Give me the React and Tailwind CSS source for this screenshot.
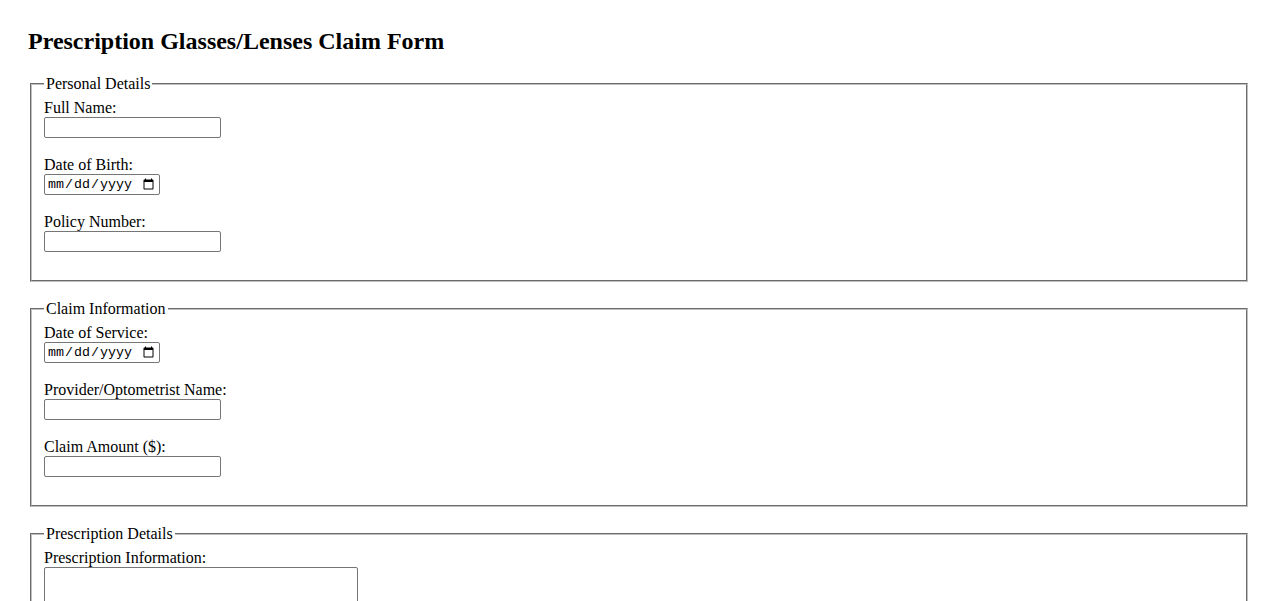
/*
Prescription Glasses/Lenses claim form.
Plain browser-looking form: serif text, grooved fieldsets, default inputs.
*/

import React from "react";

// one label + control pair
function Field({ label, children }) {
  return (
    <div className="mb-[17.6px]">
      <label className="block leading-[18.4px]">{label}</label>
      {children}
    </div>
  );
}

function TextInput() {
  return (
    <input
      type="text"
      className="block w-[177px] h-[21px] border border-[#767676] rounded-[2px] bg-white px-[2px] text-[13.33px] font-['Liberation_Sans',Arial,sans-serif]"
    />
  );
}

function DateInput() {
  return (
    <input
      type="date"
      className="block w-[116px] h-[21px] border border-[#767676] rounded-[2px] bg-white px-[2px] text-[13.33px] font-['Liberation_Mono',monospace] text-black"
    />
  );
}

function Section({ title, children }) {
  return (
    <fieldset className="mx-[2px] mb-[18px] border-2 [border-style:groove] border-[#c0c0c0] px-3 pt-[5.6px] pb-[10px] min-w-0">
      <legend className="px-[2px] leading-[18.4px]">{title}</legend>
      {children}
    </fieldset>
  );
}

function App() {
  return (
    <div className="bg-white text-black text-[16px] font-['Liberation_Serif','Times_New_Roman',serif] px-[28px] pt-[28px] pb-8">

      <h2 className="text-[24px] font-bold leading-[27.6px] mb-[19px]">
        Prescription Glasses/Lenses Claim Form
      </h2>

      <form>

        {/* PERSONAL DETAILS */}
        <Section title="Personal Details">
          <Field label="Full Name:">
            <TextInput />
          </Field>
          <Field label="Date of Birth:">
            <DateInput />
          </Field>
          <Field label="Policy Number:">
            <TextInput />
          </Field>
        </Section>

        {/* CLAIM INFORMATION */}
        <Section title="Claim Information">
          <Field label="Date of Service:">
            <DateInput />
          </Field>
          <Field label="Provider/Optometrist Name:">
            <TextInput />
          </Field>
          <Field label="Claim Amount ($):">
            <TextInput />
          </Field>
        </Section>

        {/* PRESCRIPTION DETAILS */}
        <Section title="Prescription Details">
          <Field label="Prescription Information:">
            <textarea className="block w-[314px] h-[70px] border border-[#767676] rounded-[2px] bg-white px-[2px] text-[13.33px] font-['Liberation_Mono',monospace] resize" />
          </Field>
        </Section>

        <button
          type="submit"
          className="mx-[2px] border border-[#767676] rounded-[2px] bg-[#efefef] px-[6px] py-[1px] text-[13.33px] font-['Liberation_Sans',Arial,sans-serif]"
        >
          Submit Claim
        </button>

      </form>

    </div>
  );
}

export default App;
